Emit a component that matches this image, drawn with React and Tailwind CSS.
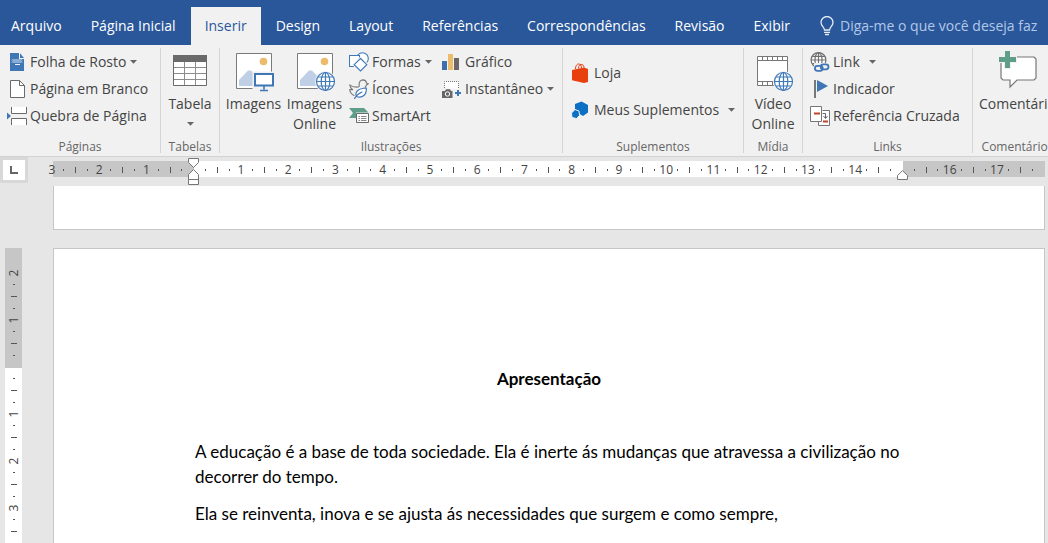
import clsx from 'clsx';

const TABS = [
  'Arquivo',
  'Página Inicial',
  'Inserir',
  'Design',
  'Layout',
  'Referências',
  'Correspondências',
  'Revisão',
  'Exibir',
];

/* ---------- icons ---------- */

function Caret({ className }) {
  return (
    <svg width="7" height="4" viewBox="0 0 7 4" className={clsx('shrink-0', className)}>
      <path d="M0 0h7L3.500 3.800z" fill="#666" />
    </svg>
  );
}

function Globe({ x = 0, y = 0, r = 9, color = '#3f79b8' }) {
  return (
    <g transform={`translate(${x} ${y})`} fill="none" stroke={color} strokeWidth="1.2">
      <circle r={r} fill="#fff" />
      <ellipse rx={r * 0.48} ry={r} />
      <path d={`M0 ${-r}V${r}M${-r} 0H${r}`} />
      <path d={`M${-r * 0.84} ${-r * 0.5}H${r * 0.84}M${-r * 0.84} ${r * 0.5}H${r * 0.84}`} />
    </g>
  );
}

function CoverIcon() {
  return (
    <svg width="20" height="20" viewBox="0 0 20 20">
      <path d="M3 1h9v6h5v12H3z" fill="#3f76b5" />
      <path d="M13 1.2V6h4z" fill="#3f76b5" />
      <path d="M5 8.5l1-1 1 1 1-1 1 1 1-1 1 1 1-1 1 1 1-1 1 1M5 10.5l1-1 1 1 1-1 1 1 1-1 1 1 1-1 1 1 1-1 1 1M8 12.5h5" fill="none" stroke="#fff" strokeWidth="0.9" />
    </svg>
  );
}

function BlankPageIcon() {
  return (
    <svg width="20" height="20" viewBox="0 0 20 20">
      <path d="M3.5 1.5h9l5 5v12h-14z" fill="#fff" stroke="#6a6a6a" />
      <path d="M12.5 1.5v5h5" fill="none" stroke="#6a6a6a" />
    </svg>
  );
}

function PageBreakIcon() {
  return (
    <svg width="20" height="20" viewBox="0 0 20 20">
      <path d="M4.500 1v6.500h15V1zM4.500 19v-6.500h15V19z" fill="#fff" />
      <path d="M4.500 1v6.500h15V1M4.500 19v-6.500h15V19" fill="none" stroke="#6a6a6a" />
      <path d="M0 6.500l4 3.500-4 3.500z" fill="#3f76b5" />
    </svg>
  );
}

function TableIcon() {
  return (
    <svg width="36" height="40" viewBox="0 0 36 40">
      <path d="M1.500 2.500h33v30h-33z" fill="#fff" stroke="#6a6a6a" />
      <path d="M1 2h34v7H1z" fill="#6a6a6a" />
      <path d="M2 14.500h32M2 20.500h32M2 26.500h32M12.500 9v23M23.500 9v23" stroke="#8c8c8c" />
    </svg>
  );
}

function Photo() {
  return (
    <>
      <path d="M2.500.5h35v35h-35z" fill="#fff" stroke="#7a7a7a" />
      <circle cx="29.500" cy="8.500" r="3.800" fill="#edbb6c" />
      <path d="M5 33v-6l9-9.500h3L28 29v4z" fill="#bfd0e6" />
    </>
  );
}

function ImagesIcon() {
  return (
    <svg width="40" height="40" viewBox="0 0 40 40">
      <Photo />
      <path d="M18.500 18.500H40V40H18.500z" fill="#f1f1f1" />
      <path d="M21 21h18v11.500H21z" fill="#fff" stroke="#3f76b5" strokeWidth="2" />
      <path d="M30 33v3.500M26 37.500h8" stroke="#3f76b5" strokeWidth="1.600" />
    </svg>
  );
}

function OnlineImagesIcon() {
  return (
    <svg width="40" height="40" viewBox="0 0 40 40">
      <Photo />
      <circle cx="30.500" cy="28.500" r="10.500" fill="#f1f1f1" />
      <Globe x={30.5} y={28.5} />
    </svg>
  );
}

function ShapesIcon() {
  return (
    <svg width="20" height="20" viewBox="0 0 20 20" fill="#fff" stroke="#3f79b8" strokeWidth="1.100">
      <circle cx="13.500" cy="6.500" r="5.800" />
      <path d="M.5 3.500h10v11H.5z" />
      <path d="M11.500 6.500l6.300 6.200-6.300 6.300-6.300-6.300z" stroke="#f1f1f1" strokeWidth="3" />
      <path d="M11.500 6.500l6.300 6.200-6.300 6.300-6.300-6.300z" />
    </svg>
  );
}

function DuckIcon() {
  return (
    <svg width="20" height="20" viewBox="0 0 20 20" fill="none" strokeLinecap="round" strokeLinejoin="round">
      <path d="M5 16.500C2.300 15.200.9 12.500.7 10.500l3 .2C1.800 9.500.9 7.800.7 5.800c2.300 2 5.300 2.600 8.500 2.200 1-.2 1.300-.9 1-1.900C9.700 3 11.500.9 14 .9c2.100.1 3.300 1.500 3.400 3.100l2 .7-2 1.300c-.2 1-.9 1.500-1.200 2.200" stroke="#777" strokeWidth="1.100" />
      <path d="M7.500 17.500C5.500 13 9 9.500 17.300 9c.5 6.500-3.700 10.500-9.800 8.500z" fill="#fff" stroke="#3f79b8" strokeWidth="1.200" />
      <path d="M5.500 19.500c1.700-3 4-5 7.500-6.500" stroke="#3f79b8" strokeWidth="1.200" />
    </svg>
  );
}

function SmartArtIcon() {
  return (
    <svg width="20" height="20" viewBox="0 0 20 20">
      <path d="M0 2h15l4.500 4.500H7V12H0l4-5z" fill="#5f9f89" />
      <path d="M7.500 7.500h12v9h-12z" fill="#fff" stroke="#6a6a6a" />
      <path d="M9.500 10.500H11M12 10.500h5.500M9.500 12.500H11M12 12.500h5.500M9.500 14.500H11M12 14.500h5.500" stroke="#888" />
    </svg>
  );
}

function ChartIcon() {
  return (
    <svg width="20" height="20" viewBox="0 0 20 20">
      <path d="M0 9h5v9H0z" fill="#3f6fab" />
      <path d="M6 2h5v16H6z" fill="#edbb6c" />
      <path d="M12 6h5v12h-5z" fill="#6d6567" />
    </svg>
  );
}

function ScreenshotIcon() {
  return (
    <svg width="20" height="20" viewBox="0 0 20 20">
      <path d="M2.500 9V2.500h14V10" fill="#fff" stroke="#777" strokeDasharray="1 1" />
      <path d="M0 12h3l1-1.800h4L9 12h1.500v7H0z" fill="#666" />
      <circle cx="5.500" cy="15" r="2.200" fill="#666" stroke="#fff" />
      <path d="M16 11v6M13 14h6" stroke="#3f76b5" strokeWidth="2" />
    </svg>
  );
}

function StoreIcon() {
  return (
    <svg width="18" height="20" viewBox="0 0 18 20">
      <path d="M4.500 6C4.500 2.500 6 1 7.500 1s3 1 3 4.200M7.500 5.500C7.500 2.500 9 1.400 10.200 1.400S13 2.400 13 4.500" fill="none" stroke="#e43d10" />
      <path d="M1 7L13 4.500l4 1.500v13L13 20 1 17.300z" fill="#e8400c" />
    </svg>
  );
}

function AddinsIcon() {
  return (
    <svg width="18" height="20" viewBox="0 0 18 20">
      <path d="M10.500 1.500L17 5v7.500l-5 3.500-8-5V4z" fill="#0b6fc4" />
      <path d="M4 9.500l4 1.500.5 4.500L5.500 18.500l-4.500-1-.500-4.500z" fill="#0b6fc4" stroke="#f1f1f1" />
    </svg>
  );
}

function OnlineVideoIcon() {
  return (
    <svg width="40" height="40" viewBox="0 0 40 40">
      <path d="M4.500 3.500h30v29h-30z" fill="#fff" stroke="#777" />
      <path d="M4.500 7.500h30M4.500 28.500h30M9.500 3.500v4M14.500 3.500v4M19.500 3.500v4M24.500 3.500v4M29.500 3.500v4M9.500 28.500v4M14.500 28.500v4M19.500 28.500v4" stroke="#777" />
      <circle cx="30.500" cy="28.500" r="10.500" fill="#f1f1f1" />
      <Globe x={30.5} y={28.5} />
    </svg>
  );
}

function LinkIcon() {
  return (
    <svg width="20" height="20" viewBox="0 0 20 20">
      <Globe x={8.5} y={8} r={7.4} color="#6f6f6f" />
      <path d="M4 11h15v9H4z" fill="#f1f1f1" />
      <g fill="none" stroke="#3f76b5" strokeWidth="1.800">
        <rect x="4.900" y="13.800" width="7.800" height="5" rx="2.500" />
        <rect x="10.700" y="12.300" width="7.800" height="5" rx="2.500" />
      </g>
    </svg>
  );
}

function BookmarkIcon() {
  return (
    <svg width="20" height="20" viewBox="0 0 20 20">
      <path d="M4 1h2v18H4z" fill="#777" />
      <path d="M7 1l11 6L7 13z" fill="#3f76b5" />
    </svg>
  );
}

function CrossRefIcon() {
  return (
    <svg width="20" height="20" viewBox="0 0 20 20">
      <path d="M12.500 4.500h7v15h-11v-4" fill="#fff" stroke="#777" />
      <path d="M.5.500h11v15H.5z" fill="#fff" stroke="#777" />
      <path d="M4 7.500h6M13 15.500h5" stroke="#c2452d" strokeWidth="2" />
      <path d="M12.500 7.500h3V12M13.500 10l2 2.500 2-2.500" fill="none" stroke="#666" />
    </svg>
  );
}

function CommentIcon() {
  return (
    <svg width="40" height="40" viewBox="0 0 40 40">
      <path d="M5 4h31l2 2v19l-2 2H19l-7 7v-7H5l-2-2V6z" fill="#fff" stroke="#777" strokeWidth="1.200" />
      <path d="M6-3h7v6h6v7h-6v6H6v-6H0V3h6z" fill="#f1f1f1" />
      <path d="M7-2h5v6h6v5h-6v6H7V9H1V4h6z" fill="#5f9f89" />
    </svg>
  );
}

function BulbIcon() {
  return (
    <svg width="14" height="20" viewBox="0 0 14 20" fill="none" stroke="#e3ebf6" strokeWidth="1.300" className="shrink-0">
      <path d="M4.500 14c0-3-3.500-4-3.500-7.500a6 6 0 0 1 12 0c0 3.500-3.500 4.500-3.500 7.500zM4 16.300h6M5 18.500h4" />
    </svg>
  );
}

/* ---------- ribbon ---------- */

function SmallButton({ icon, label, caret }) {
  return (
    <button type="button" className="flex h-[27px] items-center gap-[3px] text-left whitespace-nowrap">
      <span className="flex w-5 shrink-0 items-center">{icon}</span>
      <span>{label}</span>
      {caret && <Caret className={caret === 'wide' ? 'ml-[6px]' : 'ml-px'} />}
    </button>
  );
}

function BigButton({ icon, label, className, caret }) {
  return (
    <button type="button" className={clsx('flex flex-col items-center pt-[5px] leading-5', className)}>
      <span className="flex h-[41px] items-start [&>svg]:overflow-visible">{icon}</span>
      <span>{label}</span>
      {caret && <Caret className="mt-2" />}
    </button>
  );
}

function Group({ title, className, children }) {
  return (
    <section aria-label={title} className={clsx('flex h-[105px] shrink-0 flex-col border-r border-[#d5d5d5]', className)}>
      <div className="flex flex-1 items-start">{children}</div>
      <div className="h-[15px] text-center text-xs leading-[17px] whitespace-nowrap text-[#666]">{title}</div>
    </section>
  );
}

function Ribbon() {
  return (
    <div className="flex overflow-hidden border-b border-[#d2d2d2] bg-[#f1f1f1] py-[3px] text-sm text-[#444]">
      <Group title="Páginas" className="w-[161px]">
        <div className="pl-[7px]">
          <SmallButton icon={<CoverIcon />} label="Folha de Rosto" caret="near" />
          <SmallButton icon={<BlankPageIcon />} label="Página em Branco" />
          <SmallButton icon={<PageBreakIcon />} label="Quebra de Página" />
        </div>
      </Group>
      <Group title="Tabelas" className="w-[59px]">
        <BigButton icon={<TableIcon />} label="Tabela" className="w-full" caret />
      </Group>
      <Group title="Ilustrações" className="w-[343px]">
        <BigButton icon={<ImagesIcon />} label="Imagens" className="ml-[3px] w-[61px]" />
        <BigButton icon={<OnlineImagesIcon />} label="Imagens Online" className="w-[61px]" />
        <div className="ml-1 w-[93px]">
          <SmallButton icon={<ShapesIcon />} label="Formas" caret="near" />
          <SmallButton icon={<DuckIcon />} label="Ícones" />
          <SmallButton icon={<SmartArtIcon />} label="SmartArt" />
        </div>
        <div>
          <SmallButton icon={<ChartIcon />} label="Gráfico" />
          <SmallButton icon={<ScreenshotIcon />} label="Instantâneo" caret="near" />
        </div>
      </Group>
      <Group title="Suplementos" className="w-[181px]">
        <div className="flex flex-col gap-[10px] pt-[11px] pl-2">
          <SmallButton icon={<StoreIcon />} label="Loja" />
          <SmallButton icon={<AddinsIcon />} label="Meus Suplementos" caret="wide" />
        </div>
      </Group>
      <Group title="Mídia" className="w-[59px]">
        <BigButton icon={<OnlineVideoIcon />} label="Vídeo Online" className="w-full" />
      </Group>
      <Group title="Links" className="w-[170px]">
        <div className="pl-[7px]">
          <SmallButton icon={<LinkIcon />} label="Link" caret="wide" />
          <SmallButton icon={<BookmarkIcon />} label="Indicador" />
          <SmallButton icon={<CrossRefIcon />} label="Referência Cruzada" />
        </div>
      </Group>
      <Group title="Comentários" className="w-[90px]">
        <BigButton icon={<CommentIcon />} label="Comentário" className="w-full" />
      </Group>
    </div>
  );
}

/* ---------- rulers ---------- */

const H_TICKS = Array.from({ length: 84 }, (_, i) => i - 12);
const V_UNITS = [2, 1, 0, 1, 2, 3];

function HorizontalRuler() {
  return (
    <div className="relative mt-1 flex h-4">
      <div className="w-[141px] bg-[#c6c6c6]" />
      <div className="relative flex-1 bg-white">
        <svg width="12" height="29" viewBox="0 0 12 29" className="absolute -top-[3px] -left-[6px] z-10" fill="#fff" stroke="#777">
          <path d="M.5.500h10v4l-5 5-5-5z" />
          <path d="M5.500 11.500l5 5v10H.5v-10zM.5 21.500h10" />
        </svg>
        <svg width="12" height="11" viewBox="0 0 12 11" className="absolute top-[9px] -right-[6px] z-10" fill="#fff" stroke="#777">
          <path d="M5.500.7l5 4.800v4H.5v-4z" />
        </svg>
      </div>
      <div className="w-[142px] bg-[#c6c6c6]" />
      <div className="absolute top-px right-[7px] -bottom-px -left-[7px] flex text-xs text-[#444]">
        {H_TICKS.map((t) => (
          <span key={t} className="flex min-w-0 flex-1 items-center justify-center">
            {t % 4 === 0 && t !== 0 && t !== 60 && Math.abs(t / 4)}
            {t % 4 !== 0 && <i className={t % 2 === 0 ? 'h-[6px] w-px bg-[#555]' : 'h-[2px] w-px bg-[#555]'} />}
          </span>
        ))}
      </div>
    </div>
  );
}

function VerticalRuler() {
  return (
    <div className="relative mt-[65px] ml-[5px] flex w-[17px] flex-1 flex-col">
      <div className="h-[120px] bg-[#c6c6c6]" />
      <div className="flex-1 bg-white" />
      <div className="absolute top-[19px] right-0 left-px text-xs text-[#444]">
        {V_UNITS.map((n, i) => (
          <div key={i} className="flex h-[47px] flex-col">
            <span className="flex min-h-0 flex-1 items-center justify-center">
              {n > 0 && <b className="-rotate-90 font-normal">{n}</b>}
            </span>
            <span className="flex flex-1 items-center justify-center"><i className="h-px w-[2px] bg-[#555]" /></span>
            <span className="flex flex-1 items-center justify-center"><i className="h-px w-[6px] bg-[#555]" /></span>
            <span className="flex flex-1 items-center justify-center"><i className="h-px w-[2px] bg-[#555]" /></span>
          </div>
        ))}
      </div>
    </div>
  );
}

export default function App() {
  return (
    <div className="flex h-screen flex-col overflow-hidden bg-[#e6e6e6] font-['Open_Sans','Noto_Sans',sans-serif]">
      <header className="flex h-[45px] shrink-0 items-end overflow-hidden bg-[#2a579a] text-sm text-white">
        <nav className="-ml-[3px] flex shrink-0 gap-px">
          {TABS.map((tab) => (
            <button
              key={tab}
              type="button"
              className={clsx(
                'h-[38px] px-[14px] whitespace-nowrap',
                tab === 'Inserir' && 'bg-[#f1f1f1] text-[#2a579a]'
              )}
            >
              {tab}
            </button>
          ))}
        </nav>
        <label className="ml-4 flex h-[38px] min-w-0 flex-1 items-center gap-[6px]">
          <BulbIcon />
          <input
            type="text"
            aria-label="Diga-me"
            placeholder="Diga-me o que você deseja faz"
            className="min-w-0 flex-1 bg-transparent outline-none placeholder:text-[#b3c8e8]"
          />
        </label>
      </header>

      <Ribbon />

      <main className="flex min-h-0 flex-1">
        <div className="flex w-[53px] shrink-0 flex-col">
          <button type="button" aria-label="Tabulação" className="flex h-[26px] w-7 items-center justify-center border-[3px] border-[#d8d8d8] bg-white">
            <svg width="8" height="8" viewBox="0 0 8 8">
              <path d="M1 0v7h7" fill="none" stroke="#666" strokeWidth="2" />
            </svg>
          </button>
          <VerticalRuler />
        </div>

        <div className="flex min-w-0 flex-1 flex-col pr-[3px]">
          <HorizontalRuler />
          <div className="mt-[9px] h-[44px] shrink-0 border border-t-0 border-[#c6c6c6] bg-white" />
          <article className="mt-[18px] flex-1 border border-b-0 border-[#c6c6c6] bg-white px-[141px] pt-[117px] font-['Lato','Carlito',sans-serif] text-[17px] leading-[25px] text-black">
            <h1 className="mb-12 text-center font-bold">Apresentação</h1>
            <p className="mb-3">
              A educação é a base de toda sociedade. Ela é inerte ás mudanças que atravessa a civilização no decorrer do tempo.
            </p>
            <p>Ela se reinventa, inova e se ajusta ás necessidades que surgem e como sempre,</p>
          </article>
        </div>
      </main>
    </div>
  );
}
